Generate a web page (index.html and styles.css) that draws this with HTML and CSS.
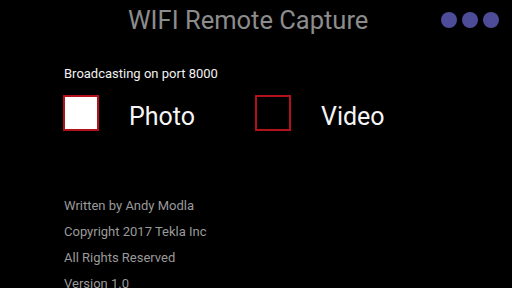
FILE: index.html
```html
<!DOCTYPE html>
<html>
<head>
<meta charset="utf-8">
<link rel="stylesheet" href="styles.css">
</head>
<body>
<div class="app">
  <header class="topbar">
    <h1 class="title">WIFI Remote Capture</h1>
    <div class="menu">
      <span class="dot"></span><span class="dot"></span><span class="dot"></span>
    </div>
  </header>
  <main class="content">
    <p class="status">Broadcasting on port 8000</p>
    <div class="modes">
      <div class="mode">
        <span class="box box-on"></span>
        <span class="label">Photo</span>
      </div>
      <div class="mode">
        <span class="box"></span>
        <span class="label">Video</span>
      </div>
    </div>
    <ul class="credits">
      <li>Written by Andy Modla</li>
      <li>Copyright 2017 Tekla Inc</li>
      <li>All Rights Reserved</li>
      <li>Version 1.0</li>
    </ul>
  </main>
</div>
</body>
</html>
```
FILE: styles.css
```css
html, body {
  margin: 0;
  padding: 0;
  background: #000;
  width: 512px;
  height: 288px;
  overflow: hidden;
}
body {
  font-family: Roboto, "Noto Sans", sans-serif;
}
.app {
  width: 512px;
  height: 288px;
}
.topbar {
  height: 40px;
  display: flex;
  align-items: center;
  padding: 0 13px 0 128px;
  justify-content: space-between;
}
.title {
  margin: 0;
  font-weight: 400;
  font-size: 25.5px;
  color: #8c8c8c;
  line-height: 40px;
}
.menu {
  display: flex;
  gap: 5px;
}
.dot {
  width: 16px;
  height: 16px;
  border-radius: 50%;
  background: #4c4c98;
}
.content {
  padding: 0 0 0 64px;
}
.status {
  margin: 26px 0 0 0;
  font-size: 13px;
  line-height: 16px;
  color: #f2f2f2;
}
.modes {
  display: flex;
  margin-top: 13px;
}
.mode {
  display: flex;
  align-items: center;
  width: 192px;
}
.mode:first-child { margin-left: -1px; }
.box {
  box-sizing: border-box;
  width: 36px;
  height: 36px;
  border: 2px solid #b3121c;
  background: #000;
}
.box-on {
  background: #fff;
}
.label {
  margin-left: 30px;
  padding-top: 6px;
  font-size: 25px;
  color: #f5f5f5;
}
.credits {
  list-style: none;
  margin: 62px 0 0 0;
  padding: 0;
  font-size: 13px;
  line-height: 26px;
  color: #9a9a9a;
}
```
